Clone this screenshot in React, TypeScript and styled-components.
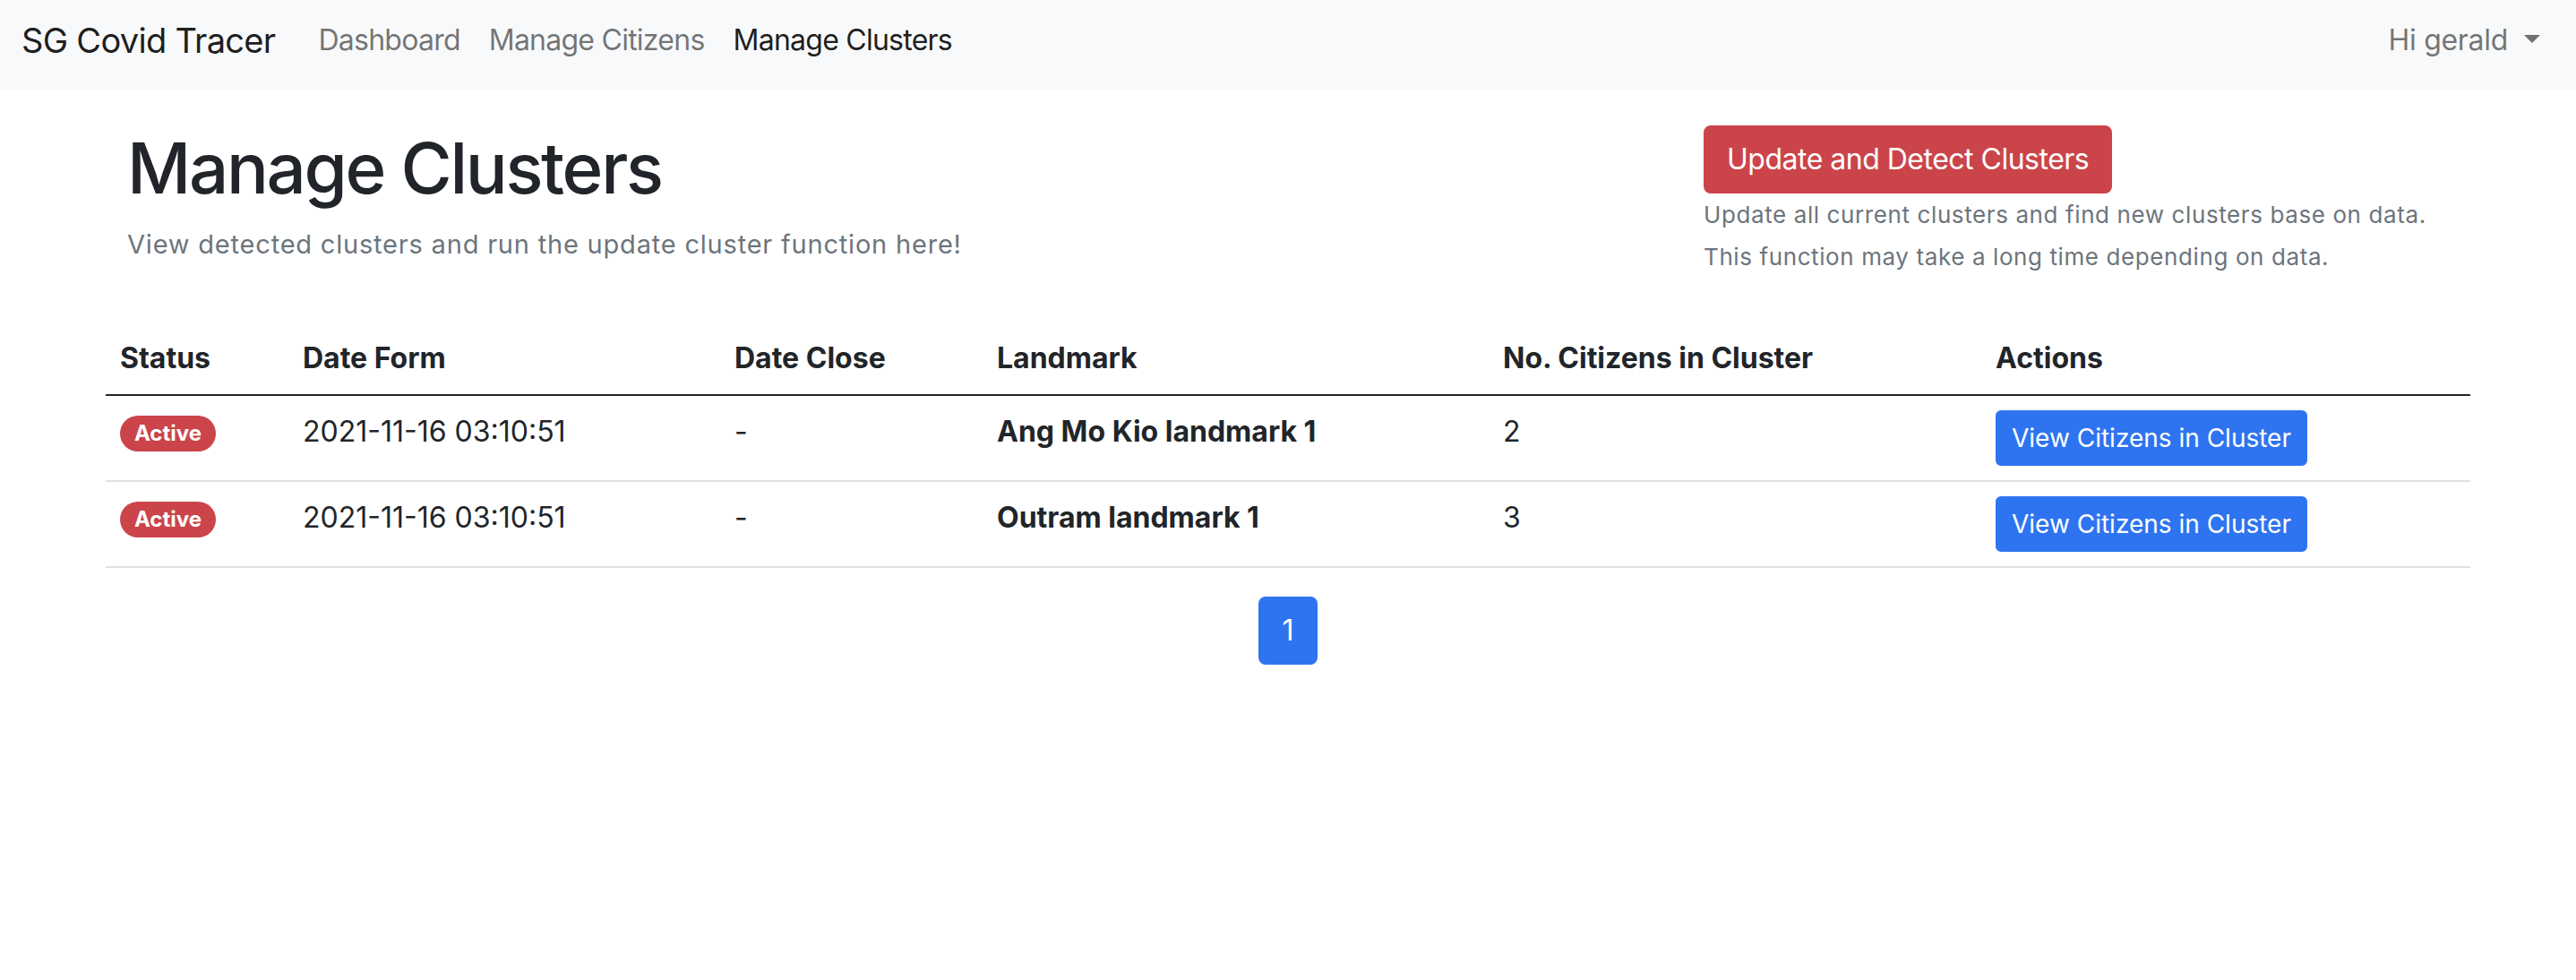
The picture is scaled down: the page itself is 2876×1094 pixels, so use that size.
import React from 'react';
import styled, { createGlobalStyle } from 'styled-components';

const GlobalStyle = createGlobalStyle`
  * {
    box-sizing: border-box;
  }
  body {
    margin: 0;
    background: #fff;
    color: #212529;
    font-family: Inter, 'Noto Sans', 'Liberation Sans', sans-serif;
    font-size: 32px;
    line-height: 1.5;
  }
`;

const clusters = [
  { id: 1, status: 'Active', formed: '2021-11-16 03:10:51', closed: '-', landmark: 'Ang Mo Kio landmark 1', count: 2 },
  { id: 2, status: 'Active', formed: '2021-11-16 03:10:51', closed: '-', landmark: 'Outram landmark 1', count: 3 },
];

const columns = [
  { title: 'Status', width: 204 },
  { title: 'Date Form', width: 482 },
  { title: 'Date Close', width: 293 },
  { title: 'Landmark', width: 565 },
  { title: 'No. Citizens in Cluster', width: 550 },
  { title: 'Actions', width: 546 },
];

const App = () => {
  return (
    <>
      <GlobalStyle />
      <Navbar>
        <Brand>SG Covid Tracer</Brand>
        <NavList>
          <NavLink>Dashboard</NavLink>
          <NavLink>Manage Citizens</NavLink>
          <NavLink active>Manage Clusters</NavLink>
        </NavList>
        <UserMenu>
          Hi gerald
          <Caret />
        </UserMenu>
      </Navbar>

      <Container>
        <HeaderRow>
          <Col>
            <Title>Manage Clusters</Title>
            <Lead>View detected clusters and run the update cluster function here!</Lead>
          </Col>
          <Col>
            <Button variant="danger">Update and Detect Clusters</Button>
            <Note>Update all current clusters and find new clusters base on data.</Note>
            <Note>This function may take a long time depending on data.</Note>
          </Col>
        </HeaderRow>

        <Table>
          <colgroup>
            {columns.map(c => (
              <col key={c.title} style={{ width: c.width }} />
            ))}
          </colgroup>
          <thead>
            <tr>
              {columns.map(c => (
                <Th key={c.title}>{c.title}</Th>
              ))}
            </tr>
          </thead>
          <tbody>
            {clusters.map(row => (
              <tr key={row.id}>
                <Td>
                  <Badge>{row.status}</Badge>
                </Td>
                <Td>{row.formed}</Td>
                <Td>{row.closed}</Td>
                <Td>
                  <b>{row.landmark}</b>
                </Td>
                <Td>{row.count}</Td>
                <Td>
                  <Button variant="primary" small>
                    View Citizens in Cluster
                  </Button>
                </Td>
              </tr>
            ))}
          </tbody>
        </Table>

        <Pagination>
          <PageLink>1</PageLink>
        </Pagination>
      </Container>
    </>
  );
};

const Navbar = styled.nav`
  height: 100px;
  background: #f8f9fa;
  display: flex;
  align-items: center;
  padding: 0 24px 10px;
`;

const Brand = styled.a`
  font-size: 38px;
  letter-spacing: -0.7px;
  color: rgba(0, 0, 0, 0.9);
  margin-right: 32px;
  white-space: nowrap;
`;

const NavList = styled.div`
  display: flex;
  align-items: center;
  flex: 1;
`;

const NavLink = styled.a<{ active?: boolean }>`
  padding: 0 16px;
  font-size: 32px;
  letter-spacing: -0.75px;
  color: ${props => (props.active ? 'rgba(0, 0, 0, 0.9)' : 'rgba(0, 0, 0, 0.55)')};
  cursor: pointer;
`;

const UserMenu = styled.a`
  padding: 0 16px;
  font-size: 32px;
  letter-spacing: -0.3px;
  color: rgba(0, 0, 0, 0.55);
  white-space: nowrap;
`;

const Caret = styled.span`
  display: inline-block;
  margin-left: 18px;
  vertical-align: 0.255em;
  border-top: 0.3em solid;
  border-right: 0.3em solid transparent;
  border-left: 0.3em solid transparent;
  border-bottom: 0;
`;

const Container = styled.main`
  width: 2640px;
  margin: 0 auto;
  padding-top: 40px;
`;

const HeaderRow = styled.div`
  display: grid;
  grid-template-columns: 2fr 1fr;
`;

const Col = styled.div`
  padding: 0 24px;
  display: flex;
  flex-direction: column;
  align-items: flex-start;
`;

const Title = styled.h1`
  margin: 0 0 16px;
  font-size: 78px;
  font-weight: 500;
  letter-spacing: -2.3px;
  line-height: 96px;
  color: #212529;
`;

const Lead = styled.p`
  margin: 0;
  font-size: 29px;
  letter-spacing: 0.8px;
  line-height: 42px;
  color: #6c757d;
`;

const Note = styled.p`
  margin: 6px 0 0;
  font-size: 26px;
  letter-spacing: 0.6px;
  line-height: 36px;
  color: #6c757d;

  & + & {
    margin-top: 11px;
  }
`;

const Button = styled.button<{ variant: 'danger' | 'primary'; small?: boolean }>`
  font-family: inherit;
  color: #fff;
  background: ${props => (props.variant === 'danger' ? '#cb444a' : '#2e74f1')};
  border: 2px solid ${props => (props.variant === 'danger' ? '#cb444a' : '#2e74f1')};
  border-radius: ${props => (props.small ? '6px' : '8px')};
  padding: ${props => (props.small ? '8px 16px' : '12px 24px')};
  font-size: ${props => (props.small ? '28px' : '32px')};
  letter-spacing: ${props => (props.small ? '0' : '-0.5px')};
  line-height: 1.5;
  cursor: pointer;
  white-space: nowrap;
`;

const Table = styled.table`
  width: 100%;
  margin-top: 55px;
  border-collapse: collapse;
  table-layout: fixed;
  vertical-align: top;
`;

const Th = styled.th`
  padding: 16px;
  text-align: left;
  font-weight: 700;
  border-bottom: 2px solid #212529;
`;

const Td = styled.td`
  padding: 16px;
  border-bottom: 2px solid #dee2e6;
  vertical-align: top;

  b {
    font-weight: 700;
  }
`;

const Badge = styled.span`
  display: inline-block;
  padding: 8px 16px;
  font-size: 24px;
  font-weight: 700;
  line-height: 1;
  color: #fff;
  background: #cb444a;
  border-radius: 999px;
  vertical-align: 1px;
`;

const Pagination = styled.nav`
  display: flex;
  justify-content: center;
  margin-top: 32px;
`;

const PageLink = styled.a`
  display: block;
  padding: 12px 24px;
  font-size: 32px;
  line-height: 48px;
  color: #fff;
  background: #2e74f1;
  border: 2px solid #2e74f1;
  border-radius: 8px;
`;

export default App;
